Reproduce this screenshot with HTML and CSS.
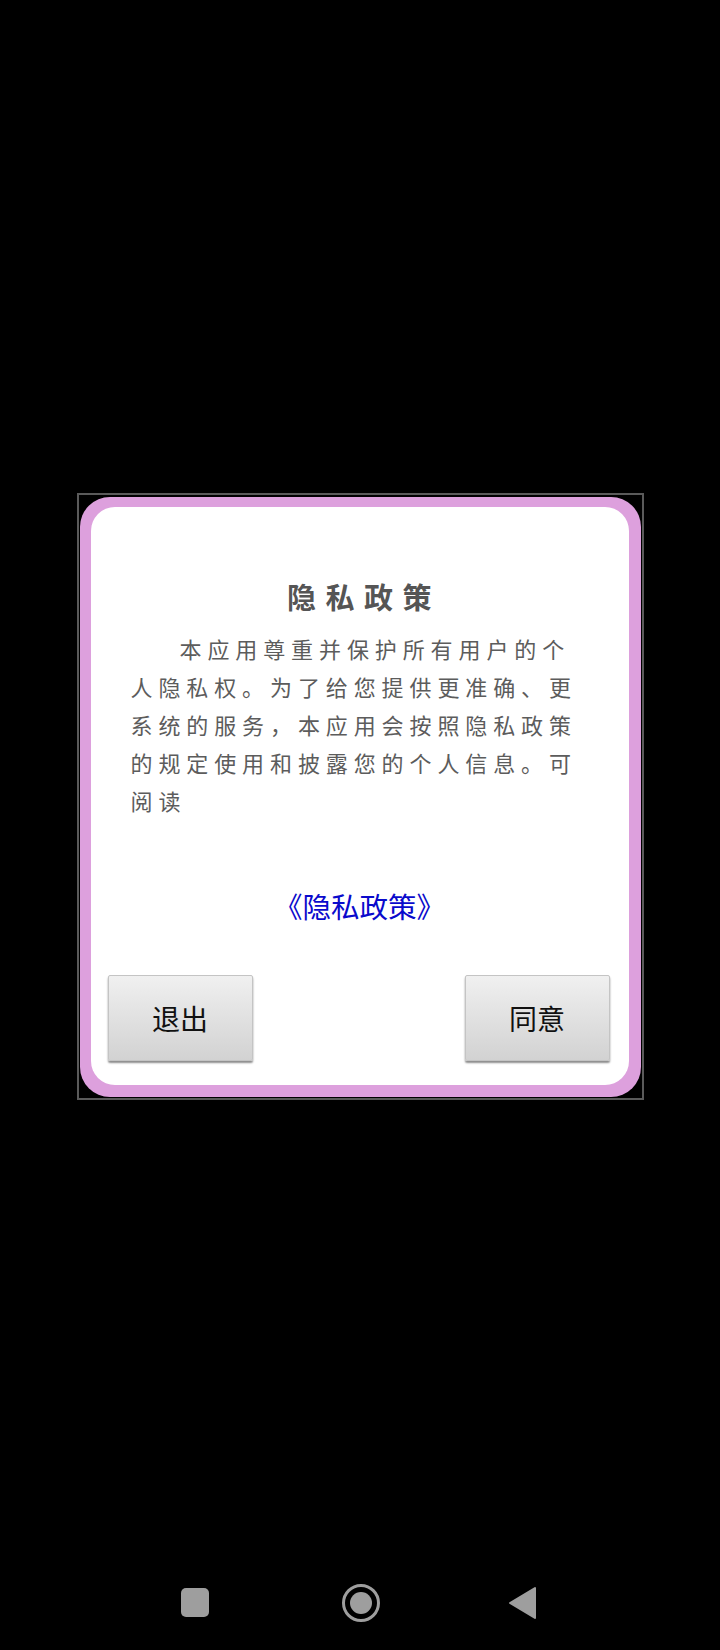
FILE: index.html
```html
<!DOCTYPE html>
<html lang="zh">
<head>
<meta charset="utf-8">
<title>隐私政策</title>
<link rel="stylesheet" href="styles.css">
</head>
<body>
<div class="screen">
  <div class="frame">
    <div class="plum">
      <div class="card">
        <h1 class="title">隐私政策</h1>
        <p class="body">本应用尊重并保护所有用户的个人隐私权。为了给您提供更准确、更系统的服务，本应用会按照隐私政策的规定使用和披露您的个人信息。可阅读</p>
        <a class="link" href="#">《隐私政策》</a>
        <div class="actions">
          <button class="btn">退出</button>
          <button class="btn">同意</button>
        </div>
      </div>
    </div>
  </div>
  <div class="nav">
    <svg class="nav-icon nav-recent" width="40" height="40" viewBox="0 0 40 40"><rect x="6" y="5" width="28" height="29" rx="5" fill="#9e9e9e"/></svg>
    <svg class="nav-icon nav-home" width="40" height="40" viewBox="0 0 40 40"><circle cx="20" cy="20" r="17.5" fill="none" stroke="#9e9e9e" stroke-width="3"/><circle cx="20" cy="20" r="11" fill="#9e9e9e"/></svg>
    <svg class="nav-icon nav-back" width="40" height="40" viewBox="0 0 40 40"><polygon points="8,20 33,5 33,35" fill="#9e9e9e" stroke="#9e9e9e" stroke-width="2" stroke-linejoin="round"/></svg>
  </div>
</div>
</body>
</html>
```

FILE: styles.css
```css
html, body {
  margin: 0;
  padding: 0;
  background: #000;
}
.screen {
  width: 720px;
  height: 1650px;
  background: #000;
  padding-top: 493px;
  box-sizing: border-box;
  font-family: "Noto Sans CJK SC", "Noto Sans", sans-serif;
}
.frame {
  width: 567px;
  box-sizing: border-box;
  margin: 0 auto;
  border: 2px solid #5a5a5a;
  padding: 2px 1px 1px 1px;
  background: #000;
}
.plum {
  background: #dda0dd;
  border-radius: 30px;
  padding: 10px 12px 12px 11px;
  height: 600px;
  box-sizing: border-box;
}
.card {
  background: #fff;
  border-radius: 24px;
  height: 100%;
  box-sizing: border-box;
  padding-top: 71px;
  display: flex;
  flex-direction: column;
}
.title {
  margin: 0;
  font-size: 29px;
  font-weight: 700;
  line-height: 36px;
  height: 36px;
  color: #555;
  text-align: center;
  letter-spacing: 9.5px;
  padding-left: 9px;
}
.body {
  margin: 16px 0 0 40px;
  width: 455px;
  font-size: 22px;
  line-height: 37.9px;
  letter-spacing: 5.9px;
  color: #5c5c5c;
  text-indent: 49px;
}
.link {
  display: block;
  margin-top: 68px;
  font-size: 28.5px;
  line-height: 36px;
  color: #0a0acc;
  text-decoration: none;
  text-align: center;
}
.actions {
  margin-top: 51px;
  display: flex;
  justify-content: space-between;
  padding: 0 19px 0 17px;
}
.btn {
  width: 145px;
  height: 86px;
  border: 1px solid #c4c4c4;
  border-radius: 2px;
  background: linear-gradient(#f0f0f0, #d2d2d2);
  box-shadow: 0 2px 2px rgba(0, 0, 0, 0.45);
  font-family: "Noto Sans CJK SC", "Noto Sans", sans-serif;
  font-size: 28px;
  color: #111;
  padding: 0;
}
.nav {
  margin-top: 483px;
  display: flex;
  align-items: center;
  height: 40px;
  padding-left: 175px;
}
.nav-icon {
  display: block;
  flex: none;
}
.nav-home {
  margin-left: 126px;
}
.nav-back {
  margin-left: 121px;
}
```
